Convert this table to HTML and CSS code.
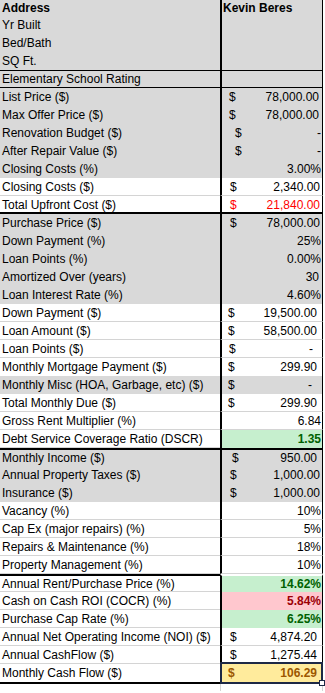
FILE: index.html
```html
<!DOCTYPE html>
<html lang="en">
<head>
<meta charset="utf-8">
<title>Property Analysis</title>
<link rel="stylesheet" href="styles.css">
</head>
<body>
<div class="sheet">
  <div class="row g first"><div class="cell lab b">Address</div><div class="cell val b hdr">Kevin Beres</div></div>
  <div class="row g"><div class="cell lab">Yr Built</div><div class="cell val"></div></div>
  <div class="row g"><div class="cell lab">Bed/Bath</div><div class="cell val"></div></div>
  <div class="row g"><div class="cell lab">SQ Ft.</div><div class="cell val"></div></div>
  <div class="row g boxed"><div class="cell lab">Elementary School Rating</div><div class="cell val"></div></div>
  <div class="row g"><div class="cell lab">List Price ($)</div><div class="cell val c7 e4"><span>$</span><span>78,000.00</span></div></div>
  <div class="row g"><div class="cell lab">Max Offer Price ($)</div><div class="cell val c7 e4"><span>$</span><span>78,000.00</span></div></div>
  <div class="row g"><div class="cell lab">Renovation Budget ($)</div><div class="cell val c13 e2"><span>$</span><span>-</span></div></div>
  <div class="row g"><div class="cell lab">After Repair Value ($)</div><div class="cell val c13 e2"><span>$</span><span>-</span></div></div>
  <div class="row g"><div class="cell lab">Closing Costs (%)</div><div class="cell val e2"><span class="only">3.00%</span></div></div>
  <div class="row w"><div class="cell lab">Closing Costs ($)</div><div class="cell val c8 e3"><span>$</span><span>2,340.00</span></div></div>
  <div class="row w thickb"><div class="cell lab">Total Upfront Cost ($)</div><div class="cell val c8 e3 red"><span>$</span><span>21,840.00</span></div></div>
  <div class="row g"><div class="cell lab">Purchase Price ($)</div><div class="cell val c8 e3"><span>$</span><span>78,000.00</span></div></div>
  <div class="row g"><div class="cell lab">Down Payment (%)</div><div class="cell val e2"><span class="only">25%</span></div></div>
  <div class="row g"><div class="cell lab">Loan Points (%)</div><div class="cell val e2"><span class="only">0.00%</span></div></div>
  <div class="row g"><div class="cell lab">Amortized Over (years)</div><div class="cell val e4"><span class="only">30</span></div></div>
  <div class="row g"><div class="cell lab">Loan Interest Rate (%)</div><div class="cell val e2"><span class="only">4.60%</span></div></div>
  <div class="row w"><div class="cell lab">Down Payment ($)</div><div class="cell val c6 e6"><span>$</span><span>19,500.00</span></div></div>
  <div class="row w"><div class="cell lab">Loan Amount ($)</div><div class="cell val c6 e6"><span>$</span><span>58,500.00</span></div></div>
  <div class="row w"><div class="cell lab">Loan Points ($)</div><div class="cell val c7 e10"><span>$</span><span>-</span></div></div>
  <div class="row w nb"><div class="cell lab">Monthly Mortgage Payment ($)</div><div class="cell val c6 e6"><span>$</span><span>299.90</span></div></div>
  <div class="row g"><div class="cell lab">Monthly Misc (HOA, Garbage, etc) ($)</div><div class="cell val c6 e11"><span>$</span><span>-</span></div></div>
  <div class="row w"><div class="cell lab">Total Monthly Due ($)</div><div class="cell val c6 e6"><span>$</span><span>299.90</span></div></div>
  <div class="row w"><div class="cell lab">Gross Rent Multiplier (%)</div><div class="cell val e2"><span class="only">6.84</span></div></div>
  <div class="row w"><div class="cell lab">Debt Service Coverage Ratio (DSCR)</div><div class="cell val e2 good"><span class="only">1.35</span></div></div>
  <div class="row g thickt"><div class="cell lab">Monthly Income ($)</div><div class="cell val c10 e6"><span>$</span><span>950.00</span></div></div>
  <div class="row g"><div class="cell lab">Annual Property Taxes ($)</div><div class="cell val c8 e3"><span>$</span><span>1,000.00</span></div></div>
  <div class="row g"><div class="cell lab">Insurance ($)</div><div class="cell val c8 e3"><span>$</span><span>1,000.00</span></div></div>
  <div class="row w"><div class="cell lab">Vacancy (%)</div><div class="cell val e2"><span class="only">10%</span></div></div>
  <div class="row w"><div class="cell lab">Cap Ex (major repairs) (%)</div><div class="cell val e2"><span class="only">5%</span></div></div>
  <div class="row w"><div class="cell lab">Repairs &amp; Maintenance (%)</div><div class="cell val e2"><span class="only">18%</span></div></div>
  <div class="row w"><div class="cell lab">Property Management (%)</div><div class="cell val e2"><span class="only">10%</span></div></div>
  <div class="row w sect"><div class="cell lab">Annual Rent/Purchase Price (%)</div><div class="cell val e2 good"><span class="only">14.62%</span></div></div>
  <div class="row w"><div class="cell lab">Cash on Cash ROI (COCR) (%)</div><div class="cell val e2 bad"><span class="only">5.84%</span></div></div>
  <div class="row w"><div class="cell lab">Purchase Cap Rate (%)</div><div class="cell val e2 good"><span class="only">6.25%</span></div></div>
  <div class="row w"><div class="cell lab">Annual Net Operating Income (NOI) ($)</div><div class="cell val c8 e6"><span>$</span><span>4,874.20</span></div></div>
  <div class="row w"><div class="cell lab">Annual CashFlow ($)</div><div class="cell val c8 e6"><span>$</span><span>1,275.44</span></div></div>
  <div class="row w last"><div class="cell lab">Monthly Cash Flow ($)</div><div class="cell val c6 e6 neutral"><span>$</span><span>106.29</span></div></div>
  <div class="row tail"><div class="cell lab"></div><div class="cell val"></div></div>
</div>
</body>
</html>
```

FILE: styles.css
```css
html, body {
  margin: 0;
  padding: 0;
  background: #ffffff;
}

body {
  font-family: "Liberation Sans", Arial, sans-serif;
  font-size: 12px;
  color: #000000;
}

.sheet {
  width: 323px;
}

.row {
  display: grid;
  grid-template-columns: 220px 103px;
  height: 18px;
  line-height: 18px;
}

.row.first {
  height: 16px;
  line-height: 16px;
}

.cell {
  box-sizing: border-box;
  height: 100%;
  white-space: nowrap;
  overflow: hidden;
}

.lab {
  padding-left: 2px;
}

.val {
  display: flex;
  justify-content: space-between;
  border-left: 2px solid #000000;
  border-right: 1px solid #000000;
  padding-left: 6px;
  padding-right: 2px;
}

.val .only {
  margin-left: auto;
}

.b {
  font-weight: bold;
}

.val.hdr {
  padding-left: 1px;
}

/* currency-sign offsets */
.c6 { padding-left: 6px; }
.c7 { padding-left: 7px; }
.c8 { padding-left: 8px; }
.c10 { padding-left: 10px; }
.c13 { padding-left: 13px; }

/* right-edge offsets */
.e2 { padding-right: 1px; }
.e3 { padding-right: 2px; }
.e4 { padding-right: 3px; }
.e6 { padding-right: 5px; }
.e10 { padding-right: 9px; }
.e11 { padding-right: 10px; }

/* fills */
.g .cell {
  background: #d9d9d9;
}

.w .cell {
  background: #ffffff;
  border-bottom: 1px solid #d4d4d4;
}

.w.nb .cell {
  border-bottom: none;
}

.row.boxed .cell {
  border-top: 1px solid #000000;
  border-bottom: 1px solid #000000;
  line-height: 16px;
}

.row.thickb .cell {
  border-bottom: 2px solid #000000;
}

.row.thickt .cell {
  border-top: 2px solid #000000;
  line-height: 16px;
}

.row.sect .lab {
  border-top: 2px solid #000000;
  line-height: 16px;
}

.row.sect .val {
  border-top: 2px solid #ffffff;
  line-height: 16px;
}

.red {
  color: #ff0000;
}

.w .cell.good,
.cell.good {
  background: #c6efce;
  color: #006100;
  font-weight: bold;
  border-bottom: none;
}

.w .cell.bad {
  background: #ffc7ce;
  color: #9c0006;
  font-weight: bold;
  border-bottom: none;
}

.row.last .lab {
  border-bottom: 2px solid #000000;
}

.w .cell.neutral {
  position: relative;
  overflow: visible;
  background: #ffeb9c;
  color: #9c5700;
  font-weight: bold;
  border-bottom: 2px solid #000000;
}

.cell.neutral::after {
  content: "";
  position: absolute;
  left: -2px;
  right: -1px;
  top: -2px;
  bottom: -2px;
  border: 2px solid #1d2845;
  pointer-events: none;
}

.cell.neutral::before {
  content: "";
  position: absolute;
  right: -3px;
  bottom: -4px;
  width: 4px;
  height: 4px;
  background: #ffffff;
  border: 1px solid #1d2845;
  z-index: 2;
}

.row.tail {
  height: 9px;
}

.row.tail .val {
  border-left: 1px solid #d4d4d4;
  border-right: 1px solid #d4d4d4;
}
```
